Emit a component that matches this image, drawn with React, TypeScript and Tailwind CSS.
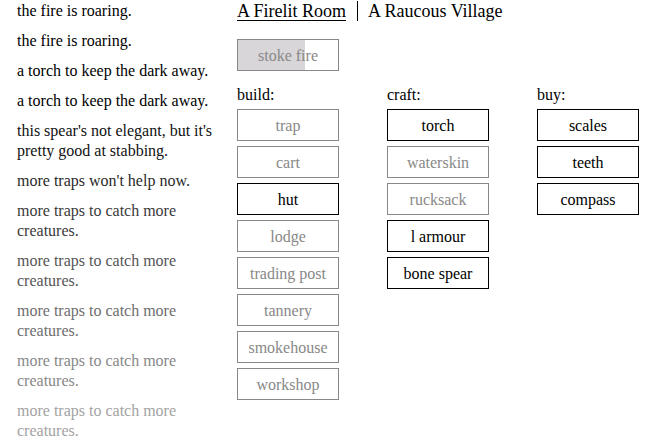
import React from "react";

type Note = { text: string; color: string };

const notes: Note[] = [
  { text: "the fire is roaring.", color: "text-black" },
  { text: "the fire is roaring.", color: "text-black" },
  { text: "a torch to keep the dark away.", color: "text-black" },
  { text: "a torch to keep the dark away.", color: "text-black" },
  { text: "this spear's not elegant, but it's pretty good at stabbing.", color: "text-[#111]" },
  { text: "more traps won't help now.", color: "text-[#2a2a2a]" },
  { text: "more traps to catch more creatures.", color: "text-[#3a3a3a]" },
  { text: "more traps to catch more creatures.", color: "text-[#555]" },
  { text: "more traps to catch more creatures.", color: "text-[#6e6e6e]" },
  { text: "more traps to catch more creatures.", color: "text-[#888]" },
  { text: "more traps to catch more creatures.", color: "text-[#a3a3a3]" },
];

type Item = { label: string; on: boolean };

const build: Item[] = [
  { label: "trap", on: false },
  { label: "cart", on: false },
  { label: "hut", on: true },
  { label: "lodge", on: false },
  { label: "trading post", on: false },
  { label: "tannery", on: false },
  { label: "smokehouse", on: false },
  { label: "workshop", on: false },
];

const craft: Item[] = [
  { label: "torch", on: true },
  { label: "waterskin", on: false },
  { label: "rucksack", on: false },
  { label: "l armour", on: true },
  { label: "bone spear", on: true },
];

const buy: Item[] = [
  { label: "scales", on: true },
  { label: "teeth", on: true },
  { label: "compass", on: true },
];

function Btn({ item }: { item: Item }) {
  return (
    <div
      className={
        item.on
          ? "w-[102px] h-[32px] pt-[2px] border border-black text-black flex items-center justify-center text-[16px] cursor-pointer"
          : "w-[102px] h-[32px] pt-[2px] border border-[#888] text-[#888] flex items-center justify-center text-[16px]"
      }
    >
      {item.label}
    </div>
  );
}

function Column({ title, items }: { title: string; items: Item[] }) {
  return (
    <div className="w-[150px] shrink-0 flex flex-col">
      <div className="h-[20px] leading-[20px] text-[16px] text-black mb-[4px]">{title}</div>
      <div className="flex flex-col gap-[5px]">
        {items.map((it) => (
          <Btn key={it.label} item={it} />
        ))}
      </div>
    </div>
  );
}

export default function App() {
  return (
    <div
      className="w-[672px] h-[447px] bg-white overflow-hidden flex"
      style={{ fontFamily: '"Liberation Serif", "Times New Roman", serif' }}
    >
      <div className="ml-[17px] w-[200px] shrink-0 pt-px flex flex-col gap-[10px] text-[16px] leading-[20px]">
        {notes.map((n, i) => (
          <div key={i} className={n.color}>
            {n.text}
          </div>
        ))}
      </div>

      <div className="ml-[20px] shrink-0 flex flex-col">
        <div className="flex items-stretch text-[18px] leading-[20px] text-black mt-px">
          <span className="underline underline-offset-[3px] pr-[11px]">A Firelit Room</span>
          <span className="border-l border-black pl-[10px]">A Raucous Village</span>
        </div>

        <div className="mt-[18px] relative w-[102px] h-[32px] pt-[2px] border border-[#888] flex items-center justify-center text-[16px] text-[#888]">
          <div className="absolute left-0 top-0 bottom-0 w-[67px] bg-[#d8d6d8]" />
          <span className="relative">stoke fire</span>
        </div>

        <div className="mt-[14px] flex">
          <Column title="build:" items={build} />
          <Column title="craft:" items={craft} />
          <Column title="buy:" items={buy} />
        </div>
      </div>
    </div>
  );
}
